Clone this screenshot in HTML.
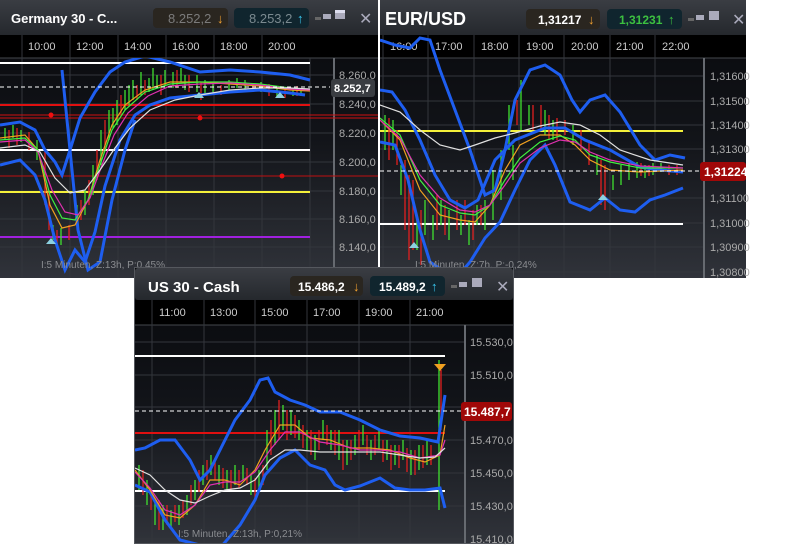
<!DOCTYPE html>
<html><head><meta charset="utf-8"><style>
body{margin:0;width:800px;height:550px;background:#fff;overflow:hidden;font-family:"Liberation Sans",sans-serif}
svg{display:block}
</style></head><body>
<svg width="800" height="550" viewBox="0 0 800 550" xmlns="http://www.w3.org/2000/svg" font-family="Liberation Sans, sans-serif">
<defs>
<linearGradient id="hd" x1="0" y1="0" x2="0" y2="1"><stop offset="0" stop-color="#3a3d43"/><stop offset="1" stop-color="#25282d"/></linearGradient>
<linearGradient id="ch" x1="0" y1="0" x2="0" y2="1"><stop offset="0" stop-color="#07080b"/><stop offset="0.5" stop-color="#121419"/><stop offset="1" stop-color="#30333a"/></linearGradient>
<clipPath id="c1"><rect x="0" y="58" width="378" height="220"/></clipPath>
<clipPath id="c2"><rect x="380" y="35" width="366" height="243"/></clipPath>
<clipPath id="c3"><rect x="135" y="325" width="378" height="218"/></clipPath>
</defs>

<!-- PANEL 1 -->
<rect x="0" y="0" width="378" height="278" fill="url(#ch)"/>
<rect x="0" y="0" width="378" height="35" fill="url(#hd)"/>
<rect x="0" y="35" width="378" height="23" fill="#000"/>
<line x1="0" y1="58" x2="378" y2="58" stroke="#44474d"/>
<text x="11" y="23" fill="#fff" font-size="13" font-weight="bold">Germany 30 - C...</text>
<rect x="153" y="8" width="75" height="20" rx="4" fill="#2a2620"/>
<text x="168" y="23" fill="#7b7b7b" font-size="13">8.252,2</text>
<text x="217" y="23" fill="#f2a230" font-size="13" font-weight="bold">↓</text>
<rect x="234" y="8" width="75" height="20" rx="4" fill="#10252e"/>
<text x="249" y="23" fill="#7b8a90" font-size="13">8.253,2</text>
<text x="297" y="23" fill="#38c8f0" font-size="13" font-weight="bold">↑</text>
<rect x="315" y="17" width="6" height="3" fill="#666"/><rect x="323" y="14" width="8" height="5" fill="#aab"/><rect x="335" y="10" width="10" height="9" fill="#aab"/><rect x="335" y="10" width="10" height="3" fill="#dde"/>
<text x="359" y="24" fill="#aab" font-size="16">✕</text>
<g stroke="#33363c" stroke-width="1">
<line x1="22" y1="35" x2="22" y2="278"/><line x1="70" y1="35" x2="70" y2="278"/><line x1="118" y1="35" x2="118" y2="278"/><line x1="166" y1="35" x2="166" y2="278"/><line x1="214" y1="35" x2="214" y2="278"/><line x1="262" y1="35" x2="262" y2="278"/><line x1="310" y1="58" x2="310" y2="278"/>
<line x1="0" y1="75" x2="333" y2="75"/><line x1="0" y1="104" x2="333" y2="104"/><line x1="0" y1="133" x2="333" y2="133"/><line x1="0" y1="162" x2="333" y2="162"/><line x1="0" y1="191" x2="333" y2="191"/><line x1="0" y1="219" x2="333" y2="219"/><line x1="0" y1="247" x2="333" y2="247"/>
</g>
<line x1="334" y1="58" x2="334" y2="278" stroke="#666a70" stroke-width="2"/>
<g fill="#ccc" font-size="11"><text x="28" y="50">10:00</text><text x="76" y="50">12:00</text><text x="124" y="50">14:00</text><text x="172" y="50">16:00</text><text x="220" y="50">18:00</text><text x="268" y="50">20:00</text></g>
<g fill="#aaa" font-size="11"><text x="339" y="79">8.260,0</text><text x="339" y="108">8.240,0</text><text x="339" y="137">8.220,0</text><text x="339" y="166">8.200,0</text><text x="339" y="195">8.180,0</text><text x="339" y="223">8.160,0</text><text x="339" y="251">8.140,0</text></g>
<g clip-path="url(#c1)">
<line x1="0" y1="63" x2="310" y2="63" stroke="#fff" stroke-width="2"/>
<line x1="0" y1="105" x2="310" y2="105" stroke="#e01010" stroke-width="2"/>
<line x1="0" y1="115" x2="378" y2="115" stroke="#d01010"/><line x1="0" y1="118" x2="378" y2="118" stroke="#d01010"/>
<line x1="0" y1="176" x2="378" y2="176" stroke="#c01010"/>
<circle cx="51" cy="115" r="2.5" fill="#f01010"/><circle cx="200" cy="118" r="2.5" fill="#f01010"/><circle cx="282" cy="176" r="2.5" fill="#f01010"/>
<line x1="0" y1="150" x2="310" y2="150" stroke="#fff" stroke-width="2"/>
<line x1="0" y1="192" x2="310" y2="192" stroke="#f4f03a" stroke-width="2"/>
<line x1="0" y1="237" x2="310" y2="237" stroke="#a020e0" stroke-width="2"/>
<path stroke="#40e030" stroke-width="1.3" fill="none" d="M5 128V140M13 125V138M21 130V142M37 140V160M53 225V240M61 228V245M77 205V225M85 190V215M93 165V195M101 130V165M109 110V140M117 100V125M125 90V110M133 80V100M141 72V95M149 78V92M157 75V88M165 70V85M173 72V88M181 68V82M197 75V92M205 80V95M213 82V92M229 80V90M237 78V88M245 80V90M261 82V92M277 88V98M293 88V96M301 88V96M129 85V105M113 108V128M153 68V90M185 75V90"/>
<path stroke="#e02020" stroke-width="1.3" fill="none" d="M9 130V148M17 128V145M29 132V150M45 150V205M49 190V230M57 230V245M69 225V240M81 200V220M89 180V205M97 150V180M105 120V150M121 95V115M137 85V100M145 80V95M161 75V95M177 70V88M189 75V92M201 82V100M221 85V95M253 84V92M269 84V96M285 88V98M297 86V96"/>
<polyline fill="none" stroke="#1e5ef0" stroke-width="3" points="0,125 20,122 35,130 45,150 55,162 62,175 70,150 80,118 95,92 110,72 125,62 145,56 170,62 200,72 230,70 260,72 290,75 310,80"/>
<polyline fill="none" stroke="#1e5ef0" stroke-width="3" points="0,165 20,160 35,175 45,200 55,240 65,270 75,250 85,262 95,232 105,186 120,140 135,115 150,105 170,98 200,95 230,92 260,90 290,93 305,95"/>
<polyline fill="none" stroke="#1e5ef0" stroke-width="3" points="62,70 70,150 78,230 88,270 100,262 112,200 125,150 135,120"/>
<polyline fill="none" stroke="#f0a020" stroke-width="1.2" points="0,138 25,135 38,150 50,205 62,228 75,225 88,200 100,160 112,125 125,105 145,90 170,82 200,82 230,84 260,86 290,90 310,91"/>
<polyline fill="none" stroke="#40f040" stroke-width="1.2" points="0,140 25,138 38,150 50,195 62,218 75,220 88,200 100,165 112,130 125,110 145,92 170,84 200,82 230,82 260,84 290,88 310,90"/>
<polyline fill="none" stroke="#e030b0" stroke-width="1.2" points="0,142 25,140 38,152 52,190 65,212 78,215 90,198 102,165 114,135 128,113 148,96 170,86 200,84 230,83 260,85 290,89 310,90"/>
<polyline fill="none" stroke="#e0e0e0" stroke-width="1.2" points="0,148 25,145 40,152 55,178 70,193 85,190 100,170 115,148 130,128 150,110 175,100 200,95 230,90 260,88 290,88 310,89"/>
<line x1="0" y1="87" x2="330" y2="87" stroke="#fff" stroke-dasharray="4,3"/>
<path d="M46 244l5-6 5 6z" fill="#8cd0e0"/><path d="M194 98l5-6 5 6z" fill="#8cd0e0"/><path d="M275 98l5-6 5 6z" fill="#8cd0e0"/>
<text x="41" y="268" fill="#8a8c90" font-size="10">I:5 Minuten, Z:13h, P:0,45%</text>
</g>
<rect x="331" y="79" width="44" height="18" rx="3" fill="#3a3d42"/>
<text x="334" y="92" fill="#fff" font-size="11" font-weight="bold">8.252,7</text>

<!-- PANEL 2 -->
<rect x="380" y="0" width="366" height="278" fill="url(#ch)"/>
<rect x="380" y="0" width="366" height="35" fill="url(#hd)"/>
<rect x="380" y="35" width="366" height="23" fill="#000"/>
<line x1="380" y1="58" x2="746" y2="58" stroke="#44474d"/>
<text x="385" y="25" fill="#fff" font-size="18" font-weight="bold">EUR/USD</text>
<rect x="526" y="9" width="74" height="20" rx="4" fill="#2a2620"/>
<text x="538" y="24" fill="#fff" font-size="12" font-weight="bold">1,31217</text>
<text x="588" y="24" fill="#f2a230" font-size="13" font-weight="bold">↓</text>
<rect x="607" y="9" width="75" height="20" rx="4" fill="#10252e"/>
<text x="619" y="24" fill="#3cc040" font-size="12" font-weight="bold">1,31231</text>
<text x="668" y="24" fill="#3cc040" font-size="13" font-weight="bold">↑</text>
<rect x="688" y="18" width="6" height="3" fill="#666"/><rect x="696" y="15" width="8" height="5" fill="#aab"/><rect x="709" y="11" width="10" height="9" fill="#aab"/>
<text x="732" y="25" fill="#aab" font-size="16">✕</text>
<g stroke="#33363c">
<line x1="383" y1="35" x2="383" y2="278"/><line x1="428" y1="35" x2="428" y2="278"/><line x1="474" y1="35" x2="474" y2="278"/><line x1="519" y1="35" x2="519" y2="278"/><line x1="564" y1="35" x2="564" y2="278"/><line x1="610" y1="35" x2="610" y2="278"/><line x1="655" y1="35" x2="655" y2="278"/>
<line x1="380" y1="76" x2="704" y2="76"/><line x1="380" y1="101" x2="704" y2="101"/><line x1="380" y1="125" x2="704" y2="125"/><line x1="380" y1="149" x2="704" y2="149"/><line x1="380" y1="198" x2="704" y2="198"/><line x1="380" y1="223" x2="704" y2="223"/><line x1="380" y1="247" x2="704" y2="247"/><line x1="380" y1="272" x2="704" y2="272"/>
</g>
<line x1="704" y1="58" x2="704" y2="278" stroke="#666a70" stroke-width="2"/>
<g fill="#ccc" font-size="11"><text x="390" y="50">16:00</text><text x="435" y="50">17:00</text><text x="481" y="50">18:00</text><text x="526" y="50">19:00</text><text x="571" y="50">20:00</text><text x="616" y="50">21:00</text><text x="662" y="50">22:00</text></g>
<g fill="#aaa" font-size="11"><text x="710" y="80">1,31600</text><text x="710" y="105">1,31500</text><text x="710" y="129">1,31400</text><text x="710" y="153">1,31300</text><text x="710" y="202">1,31100</text><text x="710" y="227">1,31000</text><text x="710" y="251">1,30900</text><text x="710" y="276">1,30800</text></g>
<g clip-path="url(#c2)">
<line x1="380" y1="131" x2="683" y2="131" stroke="#f4f03a" stroke-width="2"/>
<line x1="380" y1="224" x2="683" y2="224" stroke="#fff" stroke-width="2"/>
<path stroke="#40e030" stroke-width="1.3" fill="none" d="M385 115V150M393 120V150M401 165V195M417 215V250M425 200V235M433 215V240M441 200V225M449 210V240M461 215V235M469 220V245M477 205V225M485 200V230M493 170V220M501 150V200M509 105V150M513 145V180M521 80V130M529 105V125M545 110V135M553 120V140M573 125V145M597 155V175M613 175V190M621 165V185M629 163V180M637 162V178M645 165V178M653 163V175M661 163V172"/>
<path stroke="#e02020" stroke-width="1.3" fill="none" d="M389 118V160M397 130V165M405 160V230M409 175V260M413 180V250M421 210V265M437 195V230M445 205V235M457 200V230M465 200V225M473 210V240M481 205V225M517 100V125M533 105V130M541 105V130M549 115V140M557 118V140M565 120V135M581 130V150M589 140V165M601 160V205M605 165V210M641 163V176M649 165V176M669 165V175M677 165V175"/>
<polyline fill="none" stroke="#1e5ef0" stroke-width="3" points="380,40 395,45 410,48 420,38 430,40 440,70 455,110 470,150 485,195 495,190 505,150 515,100 530,70 545,65 560,75 572,100 580,112 590,100 605,95 620,112 640,145 655,160 670,155 685,158"/>
<polyline fill="none" stroke="#1e5ef0" stroke-width="3" points="380,142 395,145 408,180 420,230 430,262 445,272 458,276 470,262 485,238 500,222 515,190 530,160 545,145 555,165 570,202 590,210 605,198 620,210 635,212 650,200 665,195 683,188"/>
<polyline fill="none" stroke="#1e5ef0" stroke-width="3" points="380,90 392,92 405,110 420,140 435,175 450,200 465,208 478,200 495,160 515,140 545,128 565,128 585,140 610,150 640,167 660,170 683,172"/>
<polyline fill="none" stroke="#f0a020" stroke-width="1.2" points="380,120 400,140 420,190 440,215 460,220 475,222 490,205 505,170 520,145 540,135 560,135 575,145 590,160 610,170 640,172 683,170"/>
<polyline fill="none" stroke="#40f040" stroke-width="1.2" points="380,118 400,135 420,180 440,205 460,213 475,215 490,205 505,180 520,158 540,142 560,136 575,140 590,155 610,162 640,168 683,168"/>
<polyline fill="none" stroke="#e030b0" stroke-width="1.2" points="380,120 400,138 420,175 440,198 460,210 475,212 490,205 505,185 520,163 540,148 560,140 575,142 590,152 610,160 640,166 683,168"/>
<polyline fill="none" stroke="#e0e0e0" stroke-width="1.2" points="380,105 400,112 420,130 440,145 460,150 475,145 495,138 515,133 540,126 560,122 580,125 600,135 620,150 650,160 683,165"/>
<line x1="380" y1="171" x2="700" y2="171" stroke="#fff" stroke-dasharray="4,3"/>
<path d="M409 248l5-6 5 6z" fill="#8cd0e0"/><path d="M598 200l5-6 5 6z" fill="#8cd0e0"/>
<text x="415" y="268" fill="#8a8c90" font-size="10">I:5 Minuten, Z:7h, P:-0,24%</text>
</g>
<rect x="700" y="162" width="46" height="19" rx="3" fill="#a00808"/>
<text x="704" y="176" fill="#fff" font-size="12" font-weight="bold">1,31224</text>

<!-- PANEL 3 -->
<rect x="134" y="267" width="380" height="277" fill="#55585e"/>
<rect x="135" y="268" width="378" height="275" fill="url(#ch)"/>
<rect x="135" y="268" width="378" height="32" rx="3" fill="url(#hd)"/>
<rect x="135" y="300" width="378" height="25" fill="#000"/>
<line x1="135" y1="325" x2="513" y2="325" stroke="#44474d"/>
<text x="148" y="292" fill="#fff" font-size="15" font-weight="bold">US 30 - Cash</text>
<rect x="290" y="276" width="73" height="20" rx="4" fill="#2a2620"/>
<text x="298" y="291" fill="#fff" font-size="12" font-weight="bold">15.486,2</text>
<text x="353" y="291" fill="#f2a230" font-size="13" font-weight="bold">↓</text>
<rect x="370" y="276" width="75" height="20" rx="4" fill="#10252e"/>
<text x="379" y="291" fill="#fff" font-size="12" font-weight="bold">15.489,2</text>
<text x="431" y="291" fill="#38c8f0" font-size="13" font-weight="bold">↑</text>
<rect x="451" y="285" width="6" height="3" fill="#666"/><rect x="459" y="282" width="8" height="5" fill="#aab"/><rect x="472" y="278" width="10" height="9" fill="#aab"/>
<text x="496" y="292" fill="#aab" font-size="16">✕</text>
<g stroke="#33363c">
<line x1="152" y1="300" x2="152" y2="543"/><line x1="204" y1="300" x2="204" y2="543"/><line x1="255" y1="300" x2="255" y2="543"/><line x1="307" y1="300" x2="307" y2="543"/><line x1="359" y1="300" x2="359" y2="543"/><line x1="410" y1="300" x2="410" y2="543"/>
<line x1="135" y1="342" x2="465" y2="342"/><line x1="135" y1="375" x2="465" y2="375"/><line x1="135" y1="407" x2="465" y2="407"/><line x1="135" y1="440" x2="465" y2="440"/><line x1="135" y1="473" x2="465" y2="473"/><line x1="135" y1="506" x2="465" y2="506"/><line x1="135" y1="539" x2="465" y2="539"/>
</g>
<line x1="465" y1="325" x2="465" y2="543" stroke="#666a70" stroke-width="2"/>
<g fill="#ccc" font-size="11"><text x="159" y="316">11:00</text><text x="210" y="316">13:00</text><text x="261" y="316">15:00</text><text x="313" y="316">17:00</text><text x="365" y="316">19:00</text><text x="416" y="316">21:00</text></g>
<g fill="#aaa" font-size="11"><text x="470" y="346">15.530,0</text><text x="470" y="379">15.510,0</text><text x="470" y="444">15.470,0</text><text x="470" y="477">15.450,0</text><text x="470" y="510">15.430,0</text><text x="470" y="543">15.410,0</text></g>
<g clip-path="url(#c3)">
<line x1="135" y1="356" x2="445" y2="356" stroke="#fff" stroke-width="2"/>
<line x1="135" y1="491" x2="445" y2="491" stroke="#fff" stroke-width="2"/>
<line x1="135" y1="433" x2="445" y2="433" stroke="#e01010" stroke-width="2"/>
<path stroke="#40e030" stroke-width="1.3" fill="none" d="M139 465V490M147 480V505M155 500V525M163 505V530M171 510V528M179 505V525M187 495V515M195 480V500M203 465V485M211 455V475M219 465V485M227 470V490M235 465V485M243 465V480M251 475V495M259 470V490M267 430V470M275 410V445M283 405V430M291 410V435M299 420V440M307 430V450M315 435V460M323 420V440M331 430V450M339 430V460M347 440V465M355 435V455M363 425V445M371 440V460M379 430V450M387 440V460M395 445V465M403 440V460M411 450V475M419 445V470M427 440V465M439 360V510"/>
<path stroke="#e02020" stroke-width="1.3" fill="none" d="M143 470V495M151 490V510M159 500V530M167 505V525M175 505V522M183 500V518M191 485V505M199 470V492M207 460V480M215 460V480M223 468V488M231 470V490M239 470V488M247 468V485M255 478V500M263 465V485M271 420V455M279 400V440M287 410V440M295 415V438M303 425V448M311 430V455M319 430V450M327 425V445M335 430V455M343 440V470M351 440V460M359 430V450M367 435V455M375 435V455M383 440V462M391 445V470M399 445V468M407 448V472M415 450V475M423 445V468M431 445V465M441 370V430"/>
<polyline fill="none" stroke="#1e5ef0" stroke-width="3" points="135,450 145,448 160,440 175,440 190,460 200,480 210,470 225,440 235,420 250,400 260,380 268,378 275,392 290,400 305,405 320,412 340,412 360,420 380,430 400,436 420,438 438,442 445,395"/>
<polyline fill="none" stroke="#1e5ef0" stroke-width="3" points="135,485 150,492 165,520 180,540 200,545 220,548 240,525 255,500 265,475 280,458 295,450 310,465 325,470 335,485 345,490 360,486 380,478 395,488 410,490 425,490 440,488 445,508"/>
<polyline fill="none" stroke="#f0a020" stroke-width="1.2" points="135,470 150,490 165,515 180,518 195,505 210,480 225,480 240,485 255,470 265,450 280,425 295,425 310,438 330,440 350,448 370,448 390,450 410,458 425,462 440,455 445,425"/>
<polyline fill="none" stroke="#e030b0" stroke-width="1.2" points="135,472 150,488 165,510 180,515 195,505 210,485 225,482 240,482 255,472 270,450 285,432 300,432 320,442 340,445 360,450 380,450 400,452 420,458 440,455 445,440"/>
<polyline fill="none" stroke="#e0e0e0" stroke-width="1.2" points="135,468 150,475 165,490 180,500 195,503 210,496 225,490 240,488 255,480 270,460 285,450 300,450 320,452 340,452 360,452 380,452 400,455 420,458 435,457 445,448"/>
<line x1="135" y1="411" x2="462" y2="411" stroke="#fff" stroke-dasharray="4,3"/>
<path d="M434 364l6 7 6-7z" fill="#f0a020"/>
<text x="178" y="537" fill="#8a8c90" font-size="10">I:5 Minuten, Z:13h, P:0,21%</text>
</g>
<rect x="461" y="402" width="51" height="19" rx="3" fill="#a00808"/>
<text x="464" y="416" fill="#fff" font-size="12" font-weight="bold">15.487,7</text>
</svg>
</body></html>
